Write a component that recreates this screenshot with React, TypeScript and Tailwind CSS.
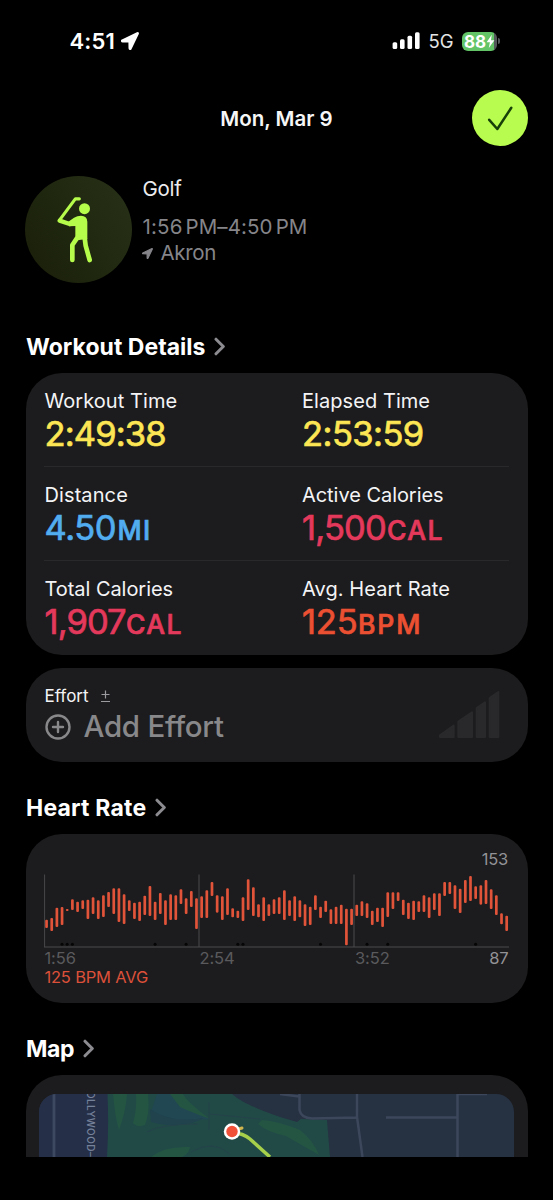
import type { ReactNode } from "react";

/* [top, bottom] of each heart-rate range, in thirds of a pixel */
const ranges: [number, number][] = [
  [269, 294], [264, 303], [233, 291], [231, 285], [237, 243], [208, 240], [215, 246], [211, 237], [209, 267], [202, 252],
  [211, 267], [196, 261], [186, 231], [175, 252], [175, 276], [193, 282], [211, 243], [218, 267], [215, 273], [197, 255],
  [168, 258], [215, 270], [189, 252], [211, 285], [193, 270], [196, 270], [178, 222], [205, 252], [183, 231], [205, 297],
  [199, 264], [181, 264], [156, 198], [196, 248], [199, 270], [175, 255], [235, 262], [242, 264], [202, 273], [148, 240],
  [172, 258], [223, 262], [202, 273], [223, 258], [208, 252], [202, 252], [181, 270], [211, 258], [199, 273], [211, 262],
  [223, 288], [230, 285], [196, 240], [230, 264], [212, 246], [238, 282], [230, 282], [224, 282], [236, 346], [236, 285],
  [224, 258], [214, 258], [220, 264], [242, 285], [233, 276], [233, 291], [187, 261], [187, 237], [187, 213], [209, 255],
  [218, 267], [212, 270], [214, 246], [196, 246], [202, 264], [190, 240], [190, 258], [156, 198], [156, 192], [166, 237],
  [176, 249], [150, 219], [138, 213], [169, 207], [166, 224], [150, 222], [178, 237], [196, 255], [250, 283], [257, 303],
];
const gaps = [3, 4, 5, 21, 27, 37, 38, 53, 62, 66, 83];
const STEP = 5.17;

function SectionTitle({ children, className }: { children: ReactNode; className: string }) {
  return (
    <h2 className={`ml-[26px] flex h-[31px] items-center text-[23px] font-bold text-white ${className}`}>
      <span className="pt-[1.500px]">{children}</span>
      <svg className="ml-[8.500px]" width="12" height="19" viewBox="0 0 12 19" fill="none">
        <path d="M2 2.2 9.3 9.5 2 16.8" stroke="#8b8b90" strokeWidth="3" strokeLinecap="round" strokeLinejoin="round" />
      </svg>
    </h2>
  );
}

function Metric({ label, labelClass = "", value, valueClass, unit, unitClass = "", color }: {
  label: string; labelClass?: string; value: string; valueClass: string; unit?: string; unitClass?: string; color: string;
}) {
  return (
    <div className="flex flex-col">
      <span className={`h-6 text-[20px] leading-6 text-[#f4f4f6] ${labelClass}`}>{label}</span>
      <span className={`flex h-[42px] items-baseline pl-[0.500px] pt-[0.500px] leading-[42px] [-webkit-text-stroke:0.700px_currentColor] [stroke-linejoin:round] ${color}`}>
        <span className={`text-[34.500px] ${valueClass}`}>{value}</span>
        {unit && <span className={`text-[26.500px] font-medium ${unitClass}`}>{unit}</span>}
      </span>
    </div>
  );
}

function LocationArrow({ size, color }: { size: number; color: string }) {
  return (
    <svg width={size} height={size} viewBox="0 0 18 18">
      <path d="M16.300 1 1.300 8.200c-.9.500-.6 1.300.3 1.300l6.700.1.100 6.700c0 1 1 1.200 1.400.3L17 1.500c.2-.5-.2-.7-.7-.5Z" fill={color} stroke={color} strokeWidth="1.800" strokeLinejoin="round" />
    </svg>
  );
}

function StatusBar() {
  return (
    <div className="flex h-[82px] items-center pl-[69.500px]">
      <span className="w-[51px] text-[22px] font-semibold tracking-[0.200px] text-white">4:51</span>
      <LocationArrow size={18} color="#fff" />
      <svg className="ml-[253.500px]" width="29" height="18" viewBox="0 0 29 18" fill="#fff">
        <rect x="0.6" y="10.3" width="4.600" height="6.700" rx="1.500" />
        <rect x="8" y="7.300" width="4.600" height="9.700" rx="1.500" />
        <rect x="15.500" y="3.700" width="4.600" height="13.300" rx="1.500" />
        <rect x="23" y="0.300" width="4.600" height="16.700" rx="1.500" />
      </svg>
      <span className="ml-[7.500px] w-[33.500px] pt-px text-[18.500px] tracking-[0.100px] text-[#e4e4e4]">5G</span>
      <div className="flex h-[19px] w-[35px] items-center rounded-[6px] bg-[linear-gradient(90deg,#62c466_0_32px,#55585a_32px)] pl-[2px]">
        <span className="pt-px text-[17px] font-bold leading-[18px] text-white">88</span>
        <svg className="shrink-0" width="9" height="15" viewBox="0 0 9 15">
          <path d="M5.800.800.600 8.200h3.300L2.800 14l5.600-7.700H5Z" fill="#fff" />
        </svg>
      </div>
      <span className="ml-px h-[6px] w-[2px] rounded-r-full bg-[#55585a]" />
    </div>
  );
}

function Golfer() {
  return (
    <svg width="107" height="107" viewBox="75 47 321 321" fill="none" stroke="#b5fc4b" strokeLinecap="round" strokeLinejoin="round">
      <path d="M238 115.500H226L178 180" strokeWidth="9.500" />
      <path d="M179 181 209 191 230 180" strokeWidth="13" />
      <circle cx="253.500" cy="145" r="16.500" fill="#b5fc4b" stroke="none" />
      <path d="M207 197.500 226 197 V226 L232 240 L243 238 L262 236 V184 Q261 167 243 166.500 Q232 166.500 222 172.500 L205 184 Z" fill="#b5fc4b" stroke="none" />
      <path d="M234 229 217 254V299" strokeWidth="14" />
      <path d="M254 232 257 256 269 299" strokeWidth="14" />
    </svg>
  );
}

function HeartChart() {
  return (
    <svg className="block" width="465" height="77" viewBox="44 872 465 77">
      <path d="M44.500 874.500V947M199 874.500V947M354 874.500V947" stroke="#434346" strokeWidth="1.200" />
      <path d="M44 947H509" stroke="#4b4b4e" strokeWidth="1.200" />
      {gaps.map((i) => <circle key={i} cx={46.5 + i * STEP} cy="944.300" r="1.500" fill="#050505" />)}
      {ranges.map(([top, bottom], i) => (
        <rect key={i} x={45.2 + i * STEP} y={830 + top / 3} width="2.700" height={(bottom - top) / 3} rx="1.100" fill="#e2543a" />
      ))}
    </svg>
  );
}

function RouteMap() {
  return (
    <svg className="block" width="475" height="63" viewBox="39 1094 475 63" fill="none">
      <path d="M39 1094H514V1157H39Z" fill="#263142" />
      <path d="M39 1094H109V1157H39Z" fill="#253048" />
      <path d="M107.500 1094H232C242 1103 263 1111 280 1117L297 1122 301 1119 327 1120 330 1157H107Q109 1125 107.500 1094Z" fill="#214a47" />
      <path d="M157 1094H172L184 1106 210 1119 176 1122 151 1112Z" fill="#204752" />
      <path d="M150 1109Q172 1124 204 1118 183 1130 151 1122Z" fill="#20434e" />
      <path d="M113 1094H127Q126 1111 119 1130 115 1117 113 1094ZM136 1094H148Q150 1113 145 1125 137 1128 133 1123 137 1110 136 1094ZM170 1094H183Q187 1102 210 1119 188 1111 180 1107ZM151 1157Q164 1146 190 1147 189 1154 182 1157ZM262 1120Q278 1121 300 1130 313 1140 319 1155 298 1143 286 1136 267 1132 258 1124Z" fill="#245543" />
      <path d="M147 1132Q161 1124 198 1124M209 1102V1130M191 1152Q213 1139 230 1154M209 1114 260 1119" stroke="#25434a" />
      <path d="M54 1094V1157" stroke="#3d4960" strokeWidth="2.800" />
      <path d="M280 1094 299 1096.500M299.500 1094V1110Q301 1118 312 1118.500L357 1117.500M357 1094V1117L362.500 1157M386 1117.500H457M457.500 1094V1157M457 1094H487" stroke="#3d475c" strokeWidth="2.500" />
      <text x="0" y="0" transform="translate(87.300 1091) rotate(90)" fill="#76819a" fontSize="10" fontWeight="500" letterSpacing="0.350">OLLYWOOD–</text>
      <path d="M234 1130.500 242 1128" stroke="#d0b44d" strokeWidth="3" strokeLinecap="round" />
      <path d="M233 1133Q243 1133 250 1139L270 1157" stroke="#a6cf4a" strokeWidth="3.500" />
      <circle cx="232" cy="1131.500" r="8.200" fill="#fff" />
      <circle cx="232" cy="1131.500" r="5.700" fill="#f05138" />
    </svg>
  );
}

export default function App() {
  return (
    <main className="h-[1200px] w-[553px] overflow-hidden bg-black font-['Inter','Liberation_Sans',sans-serif]">
      <StatusBar />
      <header className="grid h-[72px] grid-cols-[1fr_auto_1fr] items-center pr-[25px]">
        <span />
        <h1 className="pl-[25px] pt-[2.500px] text-[20.500px] font-semibold text-[#f6f6f6]">Mon, Mar 9</h1>
        <button className="flex size-[56px] items-center justify-center justify-self-end rounded-full bg-[#b8fc4f]">
          <svg width="28" height="28" viewBox="0 0 28 28" fill="none">
            <path d="M3.200 15.800 11.300 25 25.300 3.700" stroke="#174009" strokeWidth="2.500" strokeLinecap="round" strokeLinejoin="round" />
          </svg>
        </button>
      </header>

      <section className="flex h-[177px] gap-[10px] pl-[25px] pt-[21.500px]">
        <div className="size-[107px] rounded-full bg-[linear-gradient(60deg,#191e08,#283218)]">
          <Golfer />
        </div>
        <div className="flex flex-col text-[20.500px] text-[#85858a]">
          <span className="mt-[1.500px] h-6 pl-[0.500px] leading-6 tracking-[-0.300px] text-[#ececee]">Golf</span>
          <span className="mt-[13px] flex h-[26px] pl-[0.500px] leading-[26px]">
            <span className="tracking-[0.150px]">1:56</span>
            <span className="ml-[3px] tracking-[0.100px]">PM–4:50</span>
            <span className="ml-[3px]">PM</span>
          </span>
          <span className="flex h-[26px] items-center leading-[26px]">
            <span className="w-[18.500px]"><LocationArrow size={11} color="#85858a" /></span>
            <span className="tracking-[-0.300px]">Akron</span>
          </span>
        </div>
      </section>

      <SectionTitle className="tracking-[0.020px]">Workout Details</SectionTitle>
      <section className="mx-[25.500px] mt-[11px] flex h-[282px] flex-col rounded-[36px] bg-[#1c1c1e] px-[18.500px] pt-[15.500px]">
        <div className="grid h-[78px] grid-cols-[257.500px_1fr] border-b border-[#29292b]">
          <Metric label="Workout Time" labelClass="pl-[0.500px] tracking-[0.060px]" value="2:49:38" valueClass="tracking-[-0.850px]" color="text-[#fde654]" />
          <Metric label="Elapsed Time" labelClass="pl-[0.500px] tracking-[0.060px]" value="2:53:59" valueClass="tracking-[-0.550px]" color="text-[#fde654]" />
        </div>
        <div className="grid h-[94px] grid-cols-[257.500px_1fr] border-b border-[#29292b] pt-4">
          <Metric label="Distance" labelClass="pl-[0.500px] tracking-[0.100px]" value="4.50" valueClass="w-[73px] tracking-[-0.400px]" unit="MI" unitClass="tracking-[1.200px]" color="text-[#52adf0]" />
          <Metric label="Active Calories" labelClass="pl-[0.500px] tracking-[-0.050px]" value="1,500" valueClass="w-[85px] tracking-[-0.800px]" unit="CAL" unitClass="tracking-[1.400px]" color="text-[#e5395c]" />
        </div>
        <div className="grid grid-cols-[257.500px_1fr] pt-4">
          <Metric label="Total Calories" labelClass="pl-[0.500px] tracking-[-0.050px]" value="1,907" valueClass="w-[81.500px] tracking-[-0.900px]" unit="CAL" unitClass="tracking-[1.400px]" color="text-[#e5395c]" />
          <Metric label="Avg. Heart Rate" labelClass="pl-[0.500px] tracking-[0.070px]" value="125" valueClass="w-[56px] tracking-[-0.200px]" unit="BPM" unitClass="tracking-[1.900px]" color="text-[#ec5032]" />
        </div>
      </section>

      <section className="mx-[25.500px] mt-[13px] flex h-[94px] justify-between rounded-[36px] bg-[#1c1c1e] pl-[18.500px] pr-[28px] pt-[15px]">
        <div>
          <div className="flex h-6 items-center pt-[2px] text-[17px] text-[#f4f4f6]">
            <span className="pl-[0.500px] pt-px">Effort</span>
            <svg className="ml-[11px]" width="11" height="13" viewBox="0 0 11 13" stroke="#9b9b9f" strokeWidth="1.200">
              <path d="M5.500.500V8.500M1.500 4.500h8M1 11.500h9" />
            </svg>
          </div>
          <div className="flex h-[38px] items-center pt-px text-[29.500px] font-medium tracking-[-0.280px] text-[#88888a]">
            <svg className="ml-px mr-[12.500px]" width="26" height="26" viewBox="0 0 26 26" fill="none" stroke="#88888a" strokeWidth="2.400" strokeLinecap="round">
              <circle cx="13" cy="13" r="11.500" />
              <path d="M13 8v10M8 13h10" />
            </svg>
            Add Effort
          </div>
        </div>
        <svg className="mt-[7px]" width="62" height="50" viewBox="113 90 186 150" fill="#29292c" stroke="#29292c" strokeWidth="6" strokeLinejoin="round">
          <path d="M119 226 160 197V231H119ZM174 185 215 157V231H174ZM229 144 254 127V231H229ZM268 114 294 96V231H268Z" />
        </svg>
      </section>

      <SectionTitle className="mt-[30px] tracking-[0.200px]">Heart Rate</SectionTitle>
      <section className="mx-[25.500px] mt-[11px] h-[169px] rounded-[36px] bg-[#1c1c1e] px-[18.500px] pt-4">
        <div className="h-[22px] pr-px text-right text-[16.500px] leading-[18px] tracking-[-0.250px] text-[#929296]">153</div>
        <HeartChart />
        <div className="grid h-[18px] grid-cols-[155px_155.500px_1fr_auto] pl-[0.500px] pr-[0.500px] text-[16.500px] leading-[18px] tracking-[-0.100px] text-[#5a5a5d]">
          <span>1:56</span>
          <span>2:54</span>
          <span>3:52</span>
          <span className="text-[#929296]">87</span>
        </div>
        <div className="h-5 pl-[0.500px] text-[16.500px] leading-5 tracking-[-0.200px] text-[#dc5039]">125 BPM AVG</div>
      </section>

      <SectionTitle className="mt-[30px] tracking-[-0.400px]">Map</SectionTitle>
      <section className="mx-[25.500px] mt-[11px] h-[82px] overflow-hidden rounded-t-[36px] bg-[#1c1c1e] px-[13.500px] pt-[19px]">
        <div className="overflow-hidden rounded-t-[18px]">
          <RouteMap />
        </div>
      </section>
    </main>
  );
}
